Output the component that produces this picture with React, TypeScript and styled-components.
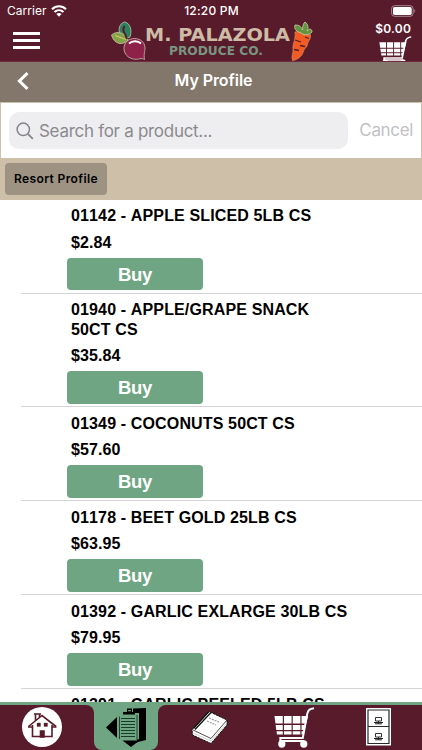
import React from "react";
import styled, { createGlobalStyle } from "styled-components";

const maroon = "#581b2b";
const green = "#6fa583";
const tan = "#cebfa9";
const taupe = "#82776a";

const GlobalStyle = createGlobalStyle`
  * { box-sizing: border-box; }
  body { margin: 0; background: #fff; overflow: hidden; }
  button { border: 0; padding: 0; margin: 0; background: none; font: inherit; color: inherit; }
`;

const Screen = styled.div`
  width: 422px;
  height: 750px;
  display: flex;
  flex-direction: column;
  overflow: hidden;
  background: #fff;
  color: #000;
  font-family: Inter, sans-serif;
`;

const Header = styled.header`
  height: 62px;
  flex: none;
  background: ${maroon};
  border-bottom: 1px solid #712c40;
  color: #fff;
  overflow: hidden;
`;

const StatusBar = styled.div`
  height: 21px;
  display: grid;
  grid-template-columns: 1fr auto 1fr;
  align-items: center;
  padding: 0 6px 0 7px;
`;

const Carrier = styled.div`
  display: flex;
  align-items: center;
  gap: 4px;
  font-size: 12px;
  letter-spacing: 0.05px;
`;

const Clock = styled.div`
  font-size: 12px;
  font-weight: 500;
  letter-spacing: 0.2px;
`;

const BatterySlot = styled.div`
  display: flex;
  justify-content: flex-end;
`;

const Brand = styled.div`
  height: 41px;
  display: flex;
  padding: 0 10px 0 13px;
`;

const MenuButton = styled.button`
  width: 28px;
  height: 20px;
  flex: none;
  margin-top: 10px;
  display: flex;
  flex-direction: column;
  gap: 4px;
  padding-top: 1px;
`;

const MenuLine = styled.span`
  width: 27px;
  height: 3px;
  background: #fff;
`;

const Logo = styled.svg`
  width: 210px;
  height: 41px;
  flex: none;
  margin-left: 70px;
`;

const CartTotal = styled.div`
  flex: 1;
  display: flex;
  flex-direction: column;
  align-items: flex-end;
  white-space: nowrap;
  font-size: 12px;
  line-height: 15px;
  font-weight: 600;
  letter-spacing: 0.2px;

  span { margin-right: 1px; }
`;

const CartDrawing = styled.svg`
  flex: none;
`;

const TitleBar = styled.div`
  height: 40px;
  flex: none;
  display: grid;
  grid-template-columns: 40px 1fr 35px;
  align-items: center;
  background: ${taupe};
  color: #fff;
`;

const BackButton = styled.button`
  display: flex;
  padding: 0 0 2px 17px;
`;

const Title = styled.h1`
  margin: 0 0 5px;
  text-align: center;
  font-size: 16px;
  line-height: 20px;
  font-weight: 600;
  letter-spacing: -0.07px;
`;

const SearchArea = styled.div`
  height: 57px;
  flex: none;
  display: flex;
  align-items: center;
  border: 1px solid ${tan};
  padding: 0 8px;
`;

const SearchField = styled.div`
  width: 340px;
  height: 37px;
  display: flex;
  align-items: center;
  gap: 5px;
  padding-left: 7px;
  border-radius: 10px;
  background: #eeeef0;
  color: #8a8a8e;
  font-size: 17px;
  letter-spacing: -0.29px;
`;

const Cancel = styled.button`
  margin: 0 0 2px 11px;
  color: #c1c1c3;
  font-size: 17px;
  letter-spacing: -0.35px;
`;

const Toolbar = styled.div`
  height: 41px;
  flex: none;
  display: flex;
  align-items: flex-start;
  padding: 4px 5px;
  background: ${tan};
`;

const ResortButton = styled.button`
  width: 102px;
  height: 32px;
  padding-bottom: 1px;
  border-radius: 4px;
  background: #9e9282;
  font-size: 12px;
  font-weight: 600;
  letter-spacing: 0.38px;
`;

const List = styled.main`
  flex: 1;
  min-height: 0;
  overflow: hidden;
  font-family: "Liberation Sans", Arial, sans-serif;
  font-weight: 700;
  font-kerning: none;
`;

const Product = styled.article`
  margin-left: 21px;
  padding: 6.4px 70px 2.5px 46px;
  border-bottom: 1px solid #d4d4d6;
`;

const ProductName = styled.div`
  padding-left: 4px;
  font-size: 16px;
  line-height: 19.7px;
  letter-spacing: 0.14px;
  white-space: pre-line;
`;

const Price = styled.div`
  padding: 6.6px 0 6px 4px;
  font-size: 16px;
  line-height: 19px;
  letter-spacing: 0.1px;
`;

const BuyButton = styled.button`
  display: block;
  width: 136px;
  height: 32.7px;
  border-radius: 4px;
  background: ${green};
  color: #fff;
  font-size: 18.5px;
  line-height: 33px;
  letter-spacing: -0.3px;
  text-align: center;
`;

const TabBar = styled.nav`
  height: 48px;
  flex: none;
  display: grid;
  grid-template-columns: 94px 64px 264px;
  background: ${maroon};
  border-top: 3px solid ${green};
`;

const TabGroup = styled.div<{ $corner: "left" | "right" }>`
  display: flex;
  background: ${maroon};
  border-radius: ${(p) => (p.$corner === "left" ? "8px 0 0 0" : "0 8px 0 0")};
`;

const CornerBacking = styled.div`
  display: grid;
  background: linear-gradient(${green} 0 12px, ${maroon} 12px);
`;

const Tab = styled.button<{ $inset: number; $top?: number; $active?: boolean }>`
  display: flex;
  align-items: flex-start;
  height: 45px;
  padding: ${(p) => p.$top ?? 1}px 0 0 ${(p) => p.$inset}px;
  background: ${(p) => (p.$active ? green : "transparent")};
  border-radius: 0 0 8px 8px;
`;

const CartIcon = ({ width, height }: { width: number; height: number }) => (
  <CartDrawing width={width} height={height} viewBox="0 0 42 41" preserveAspectRatio="none" fill="#fff">
    <path d="M.5 9H9v7.600H1.500zM10.200 9H18v7.600h-7.800zM19.200 9H27v7.600h-7.800zM28.200 9H35l-2 7.600h-4.800zM1.700 18H9v5H2.300zM10.200 18H18v5h-7.800zM19.200 18H27v5h-7.800zM28.200 18h4.500L31.500 23h-3.300zM2.600 24.300H9V27.500H3zM10.200 24.300H18v3.200h-7.800zM19.200 24.300H27v3.200h-7.800zM28.200 24.300h2.900l-.6 3.200h-2.300z" />
    <path d="M41 1.200c-4 .6-6 1.400-7 5.800L29.500 31H6.500v3H31" fill="none" stroke="#fff" strokeWidth="2" />
    <circle cx="8" cy="37" r="3.700" />
    <circle cx="30.500" cy="37" r="3.700" />
  </CartDrawing>
);

const BrandLogo = () => (
  <Logo viewBox="0 0 210 41">
    <g stroke="#c9bfb0" strokeWidth=".8">
      <path d="M8.500 12C7 6 10 1.500 14 1c6 2 7 9 5 15l-5 2C11 17 9.500 15 8.500 12z" fill="#28835d" />
      <path d="M.5 14C5 9.500 14 11 17 19c-5 6-14 4.500-16.500-5z" fill="#83a345" />
      <path d="M13 27.500C13 21 18 17.500 23.500 17.500S34 21 34 27c0 4-1.500 5-.5 11.500-2.500-1.800-4.500-.5-7-.3C19 39 13 34 13 27.500z" fill="#8d2148" />
    </g>
    <path d="M13.500 5c-2 3-1 6 .5 8l2 5" stroke={maroon} strokeWidth="2" fill="none" />
    <path d="m4 14.500 11 4" stroke="#d1cf80" fill="none" />
    <path d="M18 22.500c3-3 9-3 12 0" fill="none" stroke="#fff" strokeWidth="1.800" />
    <path d="M184 11c5-1.500 16-1 15.500 4 0 4-2.500 5-3 8 0 3-3 4-4 7-1 5-6 9-11 9.500-1.500-5 1-7 .5-12s3-9 2-16.500z" fill="#f25c24" stroke="#d98a63" strokeWidth=".7" />
    <path d="m184 19 6 2m4-5 4 1.500m-9 7 5 1m-11 3 5 1" stroke={maroon} strokeWidth="1.300" />
    <path d="M190 12c-6-2-7-5-6-8 4 0 6 1 7.500 5 0-4 1-7 2.500-8 3 2 4 6 2 9 3-3 5-2 5 1-3 3-7 4-11 1z" fill="#66933f" stroke="#c7cfaa" strokeWidth=".8" />
    <text x="34" y="20" fill="#cdbba6" fontFamily="DejaVu Sans" fontWeight="700" fontSize="18.5" textLength="145" lengthAdjust="spacingAndGlyphs">M. PALAZOLA</text>
    <text x="58" y="34" fill="#789681" fontFamily="DejaVu Sans" fontWeight="700" fontSize="12.2" textLength="94" lengthAdjust="spacingAndGlyphs">PRODUCE CO.</text>
  </Logo>
);

const WifiIcon = () => (
  <svg width="16" height="12" viewBox="0 0 16 12" fill="none" stroke="#fff" strokeWidth="2.1">
    <path d="M1 4.3c4-4 10-4 14 0M3.5 7.1c2.6-2.5 6.4-2.5 9 0" />
    <path d="M8 11.7 5.4 9c1.5-1.3 3.7-1.3 5.2 0z" fill="#fff" stroke="none" />
  </svg>
);

const BatteryIcon = () => (
  <svg width="25" height="12" viewBox="0 0 25 12">
    <rect x=".6" y=".7" width="21.5" height="10.6" rx="3" fill="none" stroke="#aa8792" />
    <rect x="2" y="2.1" width="18.7" height="7.8" rx="1.6" fill="#fff" />
    <path d="M23.3 4q1.8 2 0 4z" fill="#aa8792" />
  </svg>
);

const HomeIcon = () => (
  <svg width="42" height="42" viewBox="0 0 42 42">
    <circle cx="21" cy="21" r="20" fill="#fff" />
    <g fill="none" stroke={maroon} strokeWidth="1.6">
      <path d="M7.5 20.500 21 9.500l14 11M11.500 19v11.500h19.500V19M14.500 15V8.500m4 3V8.500m-5.500-.5h7" />
      <path d="M19.500 31v-6h3.500v6z" fill={maroon} />
      <path d="M16 20.500h3.500V17H16zm7 0h3.500V17H23z" fill={maroon} strokeWidth=".3" />
      <path d="M7 21h4.500M31 21h4.500" />
    </g>
  </svg>
);

const ProfileIcon = () => (
  <svg width="42" height="42" viewBox="0 0 42 42">
    <path d="M0 21.5 11 11v21z" />
    <path d="M27 7V2.500L40 2v32l-10 2.500V34l6-2V7z" />
    <path d="M33 7h4v26l-4 2z" />
    <path d="M13 9h18v26H13z" fill={green} />
    <path d="M17 8.500V6h4V2.500h5V6h3v2.500z" />
    <path d="M22 4.700h3" stroke={green} strokeWidth="1.2" />
    <path d="M15 12.500h14M15 15.500h14M15 18.500h14M15 21.500h14M15 24.500h14M15 27.500h14M15 30.500h14" stroke="#173b29" strokeWidth="1" />
    <path d="M13.500 33V10.500M31 9v25" fill="none" stroke="#173b29" strokeWidth=".9" />
    <path d="M16.500 34.500h17L25 41z" />
  </svg>
);

const BookIcon = () => (
  <svg width="38" height="36" viewBox="0 0 38 36">
    <path d="M1 19.5 18 1.500l18 8.500v5L20 33.500 1.500 25z" fill="#fff" stroke="#111" strokeWidth="1" strokeDasharray="2.5 .7" />
    <path d="m1 19.500 19 9L36 10" fill="none" stroke="#222" strokeWidth=".8" />
    <path d="m2 23 18 8 15-17" fill="none" stroke="#bbb" strokeWidth=".7" />
    <path d="M2.500 18.500 18 1.500m-14 18 16-17" stroke="#111" strokeWidth="1.3" />
    <path d="m18 8 10 4m-12-1 9 4" stroke="#999" strokeWidth="1.2" strokeDasharray="2 1" />
  </svg>
);

const CabinetIcon = () => (
  <svg width="25" height="38" viewBox="0 0 25 38">
    <path d="M0 0h25v37.5H0z" fill="#fff" />
    <path d="M2 2h21v33.5H2zM2 18.5h21" fill="none" stroke="#292929" strokeWidth="1.2" />
    {[0, 16].map((y) => (
      <g key={y} transform={`translate(0 ${y})`}>
        <path d="M9.5 9.500h6v3.500h-6z" fill="none" stroke="#333" />
        <path d="M8 14.500h9M9 15.800h7M12.500 13v3" stroke="#222" />
      </g>
    ))}
  </svg>
);

const products = [
  { name: "01142 - APPLE SLICED 5LB CS", price: "$2.84" },
  { name: "01940 - APPLE/GRAPE SNACK\n50CT CS", price: "$35.84" },
  { name: "01349 - COCONUTS 50CT CS", price: "$57.60" },
  { name: "01178 - BEET GOLD 25LB CS", price: "$63.95" },
  { name: "01392 - GARLIC EXLARGE 30LB CS", price: "$79.95" },
];

export default function App() {
  return (
    <>
      <GlobalStyle />
      <Screen>
        <Header>
          <StatusBar>
            <Carrier>Carrier <WifiIcon /></Carrier>
            <Clock>12:20 PM</Clock>
            <BatterySlot><BatteryIcon /></BatterySlot>
          </StatusBar>
          <Brand>
            <MenuButton aria-label="Menu"><MenuLine /><MenuLine /><MenuLine /></MenuButton>
            <BrandLogo />
            <CartTotal><span>$0.00</span><CartIcon width={33} height={29} /></CartTotal>
          </Brand>
        </Header>
        <TitleBar>
          <BackButton aria-label="Back">
            <svg width="12" height="18" viewBox="0 0 12 18" fill="none" stroke="#fff" strokeWidth="3"><path d="M10.5 1.2 2.4 9l8.1 7.8" /></svg>
          </BackButton>
          <Title>My Profile</Title>
        </TitleBar>
        <SearchArea>
          <SearchField>
            <svg width="18" height="18" viewBox="0 0 18 18" fill="none" stroke="#85858a" strokeWidth="1.5"><circle cx="7.3" cy="7.3" r="6.2" /><path d="m11.8 11.8 5 5" strokeWidth="1.8" /></svg>
            Search for a product...
          </SearchField>
          <Cancel>Cancel</Cancel>
        </SearchArea>
        <Toolbar><ResortButton>Resort Profile</ResortButton></Toolbar>
        <List>
          {products.map((p) => (
            <Product key={p.name}>
              <ProductName>{p.name}</ProductName>
              <Price>{p.price}</Price>
              <BuyButton>Buy</BuyButton>
            </Product>
          ))}
          <Product><ProductName>01391 - GARLIC PEELED 5LB CS</ProductName></Product>
        </List>
        <TabBar>
          <CornerBacking>
            <TabGroup $corner="right"><Tab $inset={21} aria-label="Home"><HomeIcon /></Tab></TabGroup>
          </CornerBacking>
          <CornerBacking><Tab $active $inset={12} aria-label="Profile"><ProfileIcon /></Tab></CornerBacking>
          <CornerBacking>
            <TabGroup $corner="left">
              <Tab $inset={33} $top={5} aria-label="Catalog"><BookIcon /></Tab>
              <Tab $inset={45} $top={2} aria-label="Cart"><CartIcon width={41} height={41} /></Tab>
              <Tab $inset={51} $top={3} aria-label="Orders"><CabinetIcon /></Tab>
            </TabGroup>
          </CornerBacking>
        </TabBar>
      </Screen>
    </>
  );
}
